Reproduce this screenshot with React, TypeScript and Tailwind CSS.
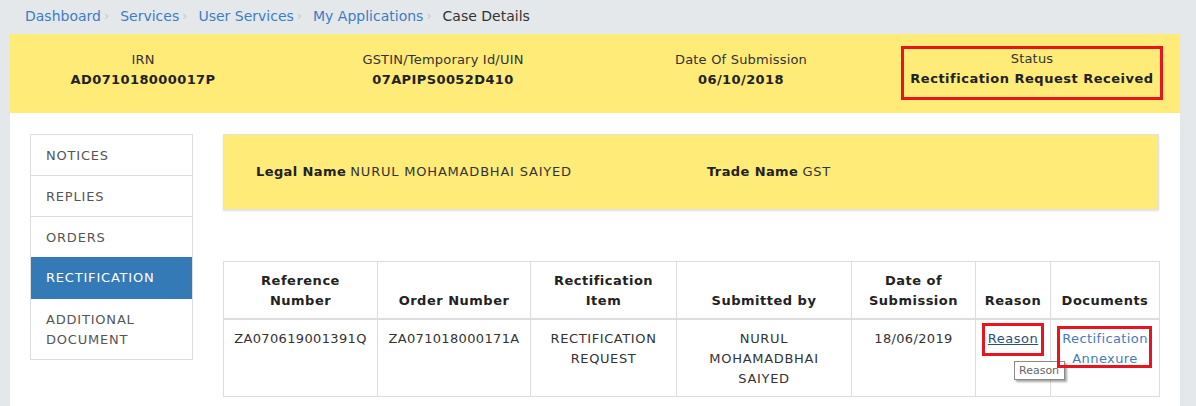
import React from 'react';

const crumbs = ['Dashboard', 'Services', 'User Services', 'My Applications'];

const summary = [
    { label: 'IRN', value: 'AD071018000017P' },
    { label: 'GSTIN/Temporary Id/UIN', value: '07APIPS0052D410' },
    { label: 'Date Of Submission', value: '06/10/2018' },
];

const tabs = ['NOTICES', 'REPLIES', 'ORDERS', 'RECTIFICATION', 'ADDITIONAL DOCUMENT'];

const App: React.FC = () => {
    return (
        <div className="w-[1196px] h-[406px] overflow-hidden bg-[#e4e8eb] font-['DejaVu_Sans',Verdana,sans-serif] text-[13px] leading-[20px] text-[#333]">
            <div className="ml-[10px] w-[1170px]">
                {/* Breadcrumb */}
                <nav className="h-[34px] flex items-center pl-[15px] text-[14px] pb-[2px]">
                    {crumbs.map((c) => (
                        <span key={c} className="flex items-center">
                            <a className="text-[#3f7cc2]">{c}</a>
                            <span className="ml-[3px] mr-[11px] text-[#c5c9cc] text-[13px]">›</span>
                        </span>
                    ))}
                    <span className="text-[#333]">Case Details</span>
                </nav>

                {/* Case summary band */}
                <div className="bg-[#feeb78] h-[79px] grid grid-cols-[266px_334px_262px_1fr] pt-[16px] tracking-[0.4px]">
                    {summary.map((s) => (
                        <div key={s.label} className="text-center">
                            <div className="text-[#333] tracking-[0.2px]">{s.label}</div>
                            <div className="font-bold text-[#222]">{s.value}</div>
                        </div>
                    ))}
                    <div className="pl-[29px] -mt-[4px]">
                        <div className="w-[262px] h-[54px] border-[3px] border-[#e8141e] text-center">
                            <div className="text-[#333] tracking-[0.2px]">Status</div>
                            <div className="font-bold text-[#222] tracking-[0.5px]">Rectification Request Received</div>
                        </div>
                    </div>
                </div>

                {/* Body */}
                <div className="bg-white h-[293px] flex pt-[21px] pl-[20px]">
                    <ul className="w-[163px] self-start border border-[#ddd] tracking-[0.8px]">
                        {tabs.map((t, i) => (
                            <li
                                key={t}
                                className={
                                    t === 'RECTIFICATION'
                                        ? 'bg-[#337ab7] text-white px-[15px] pt-[11px] pb-[9px] h-[42px]'
                                        : 'text-[#555] px-[15px] pt-[11px] pb-[9px] bg-white ' +
                                          (i < tabs.length - 1 && tabs[i + 1] !== 'RECTIFICATION' ? 'border-b border-[#ddd]' : '')
                                }
                            >
                                {t === 'ADDITIONAL DOCUMENT' ? (
                                    <>
                                        ADDITIONAL
                                        <br />
                                        DOCUMENT
                                    </>
                                ) : (
                                    t
                                )}
                            </li>
                        ))}
                    </ul>

                    <div className="ml-[30px] w-[936px]">
                        <div className="h-[76px] bg-[#feeb78] border border-[#e2e2e2] shadow-[0_1px_2px_rgba(0,0,0,0.12)] grid grid-cols-2 items-center px-4">
                            <div className="px-4">
                                <span className="font-bold text-[#222] tracking-[0.4px]">Legal Name</span>{' '}
                                <span className="tracking-[0.8px]">NURUL MOHAMADBHAI SAIYED</span>
                            </div>
                            <div className="px-4">
                                <span className="font-bold text-[#222] tracking-[0.4px]">Trade Name</span>{' '}
                                <span className="tracking-[0.8px]">GST</span>
                            </div>
                        </div>

                        <table className="mt-[51px] w-[936px] table-fixed border-collapse">
                            <thead>
                                <tr className="font-bold text-[#222] tracking-[0.5px]">
                                    <th className="w-[154px] border border-b-2 border-[#ddd] px-1 pt-[9px] pb-[7px] align-bottom">Reference Number</th>
                                    <th className="w-[153px] border border-b-2 border-[#ddd] px-1 pt-[9px] pb-[7px] align-bottom">Order Number</th>
                                    <th className="w-[146px] border border-b-2 border-[#ddd] px-1 pt-[9px] pb-[7px] align-bottom">Rectification Item</th>
                                    <th className="w-[175px] border border-b-2 border-[#ddd] px-1 pt-[9px] pb-[7px] align-bottom">Submitted by</th>
                                    <th className="w-[124px] border border-b-2 border-[#ddd] px-1 pt-[9px] pb-[7px] align-bottom">Date of Submission</th>
                                    <th className="w-[75px] border border-b-2 border-[#ddd] px-1 pt-[9px] pb-[7px] align-bottom">Reason</th>
                                    <th className="w-[109px] border border-b-2 border-[#ddd] px-1 pt-[9px] pb-[7px] align-bottom">Documents</th>
                                </tr>
                            </thead>
                            <tbody>
                                <tr className="text-center align-top">
                                    <td className="border border-[#ddd] px-[4px] pt-[9px] pb-[7px] tracking-[0.35px]">ZA070619001391Q</td>
                                    <td className="border border-[#ddd] px-[4px] pt-[9px] pb-[7px] tracking-[0.35px]">ZA071018000171A</td>
                                    <td className="border border-[#ddd] px-1 pt-[9px] pb-[7px] tracking-[0.6px]">
                                        RECTIFICATION
                                        <br />
                                        REQUEST
                                    </td>
                                    <td className="border border-[#ddd] px-1 pt-[9px] pb-[7px] tracking-[0.7px]">
                                        NURUL
                                        <br />
                                        MOHAMADBHAI
                                        <br />
                                        SAIYED
                                    </td>
                                    <td className="border border-[#ddd] px-1 pt-[9px] pb-[7px] tracking-[0.35px]">18/06/2019</td>
                                    <td className="relative border border-[#ddd] px-1 pt-[9px] pb-[7px] tracking-[0.5px]">
                                        <a className="text-[#23527c] underline">Reason</a>
                                        {/* annotation box */}
                                        <span className="absolute left-[6px] top-[3px] w-[62px] h-[33px] border-[3px] border-[#e8141e]" />
                                        {/* hover tooltip */}
                                        <span className="absolute z-10 left-[38px] top-[41px] w-[51px] h-[19px] bg-white border border-[#8a8a8a] shadow-[2px_2px_2px_rgba(0,0,0,0.35)] text-[11px] leading-[17px] tracking-normal text-[#666] text-left pl-[4px]">
                                            Reason
                                        </span>
                                    </td>
                                    <td className="relative border border-[#ddd] px-1 pt-[9px] pb-[7px] tracking-[0.4px]">
                                        <a className="text-[#3f7cc2]">
                                            Rectification
                                            <br />
                                            Annexure
                                        </a>
                                        <span className="absolute z-20 left-[6px] top-[6px] w-[95px] h-[42px] border-[3px] border-[#e8141e]" />
                                    </td>
                                </tr>
                            </tbody>
                        </table>
                    </div>
                </div>
            </div>
        </div>
    );
};

export default App;
